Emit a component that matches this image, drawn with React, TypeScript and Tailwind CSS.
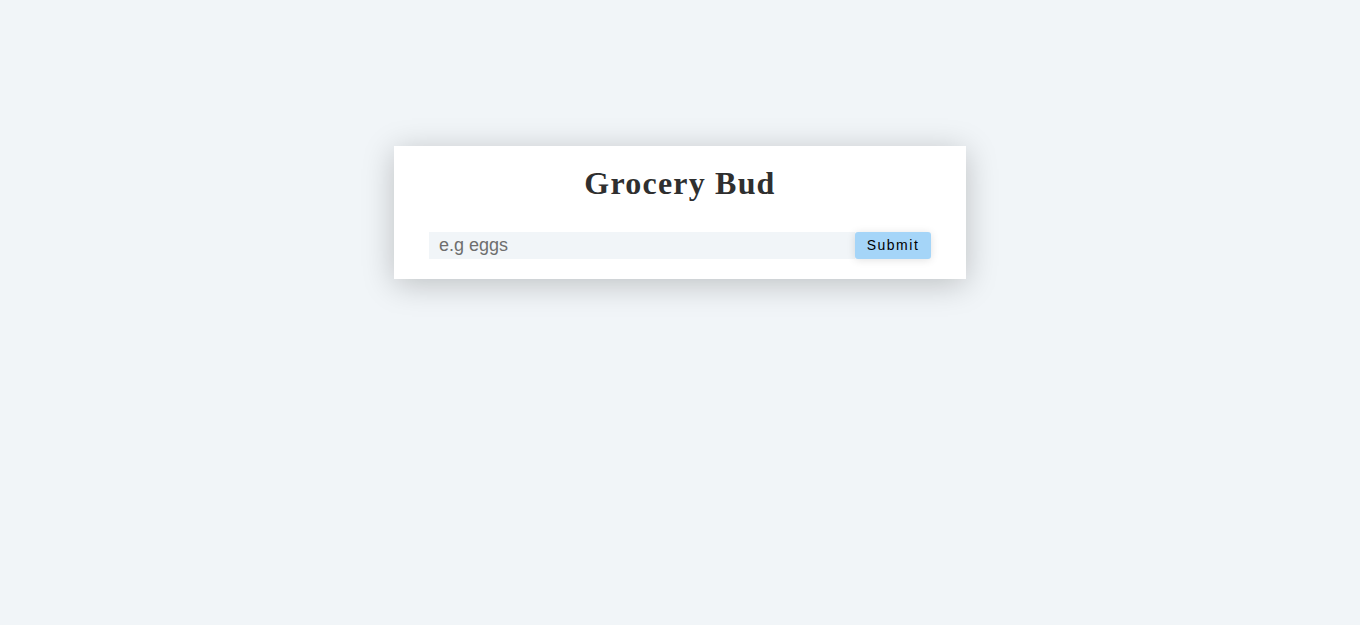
import React from "react";

export default function App() {
  return (
    <div className="min-h-[625px] w-full bg-[#f1f5f8] pt-[146px]" style={{ fontFamily: '"Liberation Sans", Arial, sans-serif' }}>
      <section className="mx-auto w-[572px] bg-white px-[35px] pb-[20px] pt-[19px] shadow-[0_5px_30px_rgba(0,0,0,0.22)]">
        <h3
          className="text-center text-[32px] font-bold leading-[36px] tracking-[1.2px] text-[#2f2f2f]"
          style={{ fontFamily: '"Liberation Serif", "Times New Roman", serif' }}
        >
          Grocery Bud
        </h3>
        <form className="mt-[31px] flex" onSubmit={(e) => e.preventDefault()}>
          <input
            type="text"
            placeholder="e.g eggs"
            className="h-[27px] flex-1 bg-[#f1f5f8] px-[10px] text-[18px] text-[#333] outline-none placeholder:text-[#6e6e6e]"
          />
          <button
            type="submit"
            className="h-[27px] w-[76px] rounded-[3px] bg-[#a5d5f8] text-[14px] tracking-[1.5px] text-black shadow-[0_1px_8px_rgba(0,0,0,0.12)]"
          >
            Submit
          </button>
        </form>
      </section>
    </div>
  );
}
